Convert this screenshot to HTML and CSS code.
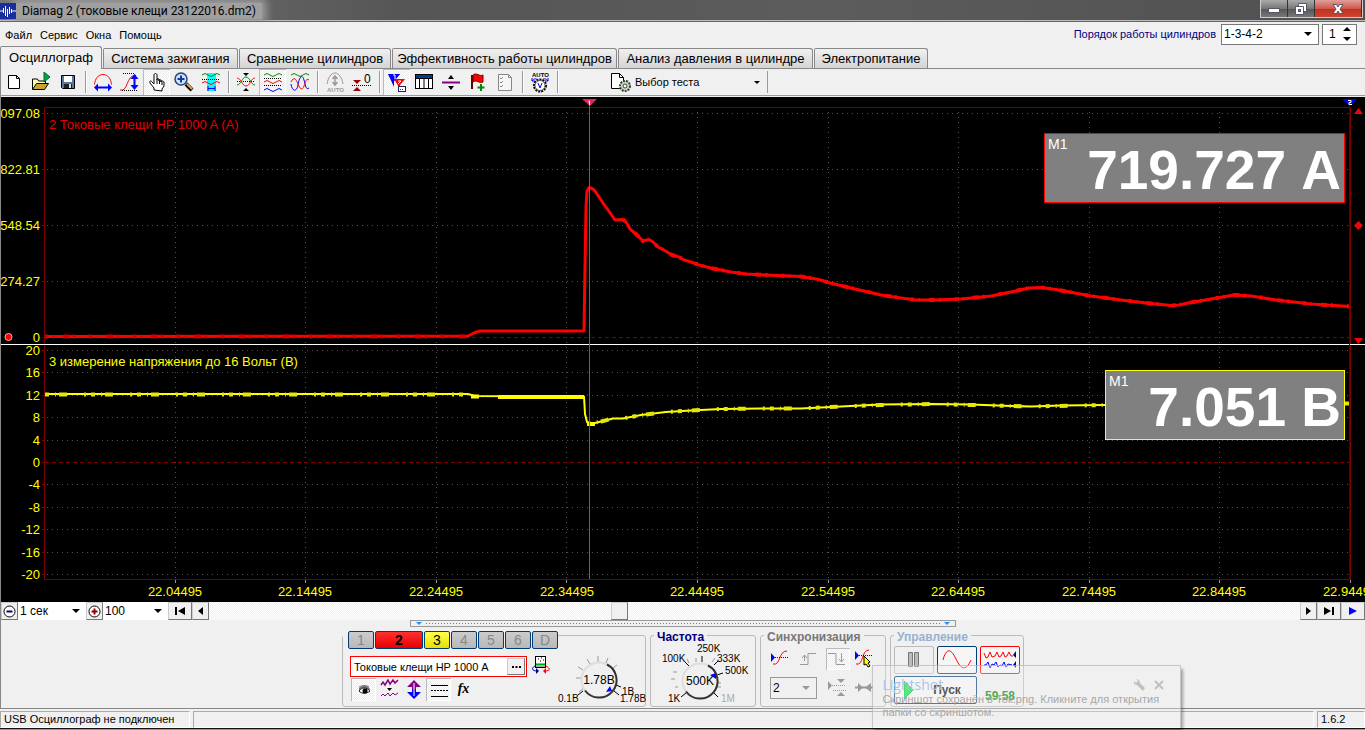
FILE: index.html
```html
<!DOCTYPE html>
<html lang="ru">
<head>
<meta charset="utf-8">
<title>Diamag 2</title>
<link rel="stylesheet" href="styles.css">
</head>
<body>
<div class="app">
<header class="titlebar">
  <svg class="app-icon" width="16" height="16" viewBox="0 0 16 16"><rect width="16" height="16" fill="#1a2f9c"/><path d="M0 8h3M3.500 5v5M5.500 3v10M7.500 6v8M9.500 4v7M11.500 6v4M12 8h4" stroke="#fff" fill="none"/></svg>
  <h1 class="title">Diamag 2 (токовые клещи 23122016.dm2)</h1>
  <div class="win-buttons">
    <button class="win" aria-label="Свернуть"><svg width="14" height="12" viewBox="0 0 14 12"><rect x="1.500" y="5.500" width="11" height="4" fill="#fff" stroke="#555869"/></svg></button>
    <button class="win" aria-label="Восстановить"><svg width="14" height="14" viewBox="0 0 14 14"><path d="M4.500 1.500h8v8h-8z" fill="#fff" stroke="#555869"/><path d="M1.500 4.500h8v8h-8z" fill="#fff" stroke="#555869"/><rect x="4.500" y="7.500" width="2" height="2" fill="#888" stroke="#555869"/></svg></button>
    <button class="win close" aria-label="Закрыть"><svg width="14" height="12" viewBox="0 0 14 12"><path d="M2 1.500h3.500L7 4l1.500-2.500H12L9 6l3 4.500H8.500L7 8l-1.500 2.500H2L5 6z" fill="#fff" stroke="#555869"/></svg></button>
  </div>
</header>

<div class="menurow">
  <nav class="menu"><button>Файл</button><button>Сервис</button><button>Окна</button><button>Помощь</button></nav>
  <label class="order" for="order">Порядок работы цилиндров</label>
  <span class="pick order-pick"><select id="order"><option>1-3-4-2</option></select><i class="arrow"></i></span>
  <span class="spin"><input type="text" value="1" aria-label="Номер цилиндра"><svg width="8" height="14" viewBox="0 0 8 14"><path d="M0 4l4-4 4 4zM0 10h8l-4 4z"/></svg></span>
</div>

<nav class="tabs">
  <button class="tab t1 active">Осциллограф</button><button class="tab t2">Система зажигания</button><button class="tab t3">Сравнение цилиндров</button><button class="tab t4">Эффективность работы цилиндров</button><button class="tab t5">Анализ давления в цилиндре</button><button class="tab t6">Электропитание</button>
</nav>

<main class="work">
<div class="toolbar">
  <button class="tool" aria-label="Новый"><svg viewBox="0 0 24 24"><path d="M6.500 5.500h8l3 3v10h-11z" fill="#fff" stroke="#000"/><path d="M14.500 5.500v3h3" fill="none" stroke="#000"/></svg></button>
  <button class="tool" aria-label="Открыть"><svg viewBox="0 0 24 24"><path d="M3.500 19v-10h5l1 2h7v4" fill="#ffffb0" stroke="#000"/><path d="M3.500 19.500l4-6h12l-4 6z" fill="#c8a42c" stroke="#000"/><path d="M15 2l6 5-6 5z" fill="#00a838" stroke="#064"/></svg></button>
  <button class="tool" aria-label="Сохранить"><svg viewBox="0 0 24 24"><path d="M5.500 5.500h13v13h-12l-1-1z" fill="#5878a8" stroke="#000"/><path d="M8 6h8v6H8z" fill="#fff"/><path d="M8 14h8v4H8z" fill="#222"/><path d="M13 14h2v4h-2z" fill="#ddd"/></svg></button>
  <i class="sep"></i>
  <button class="tool" aria-label="Масштаб по горизонтали"><svg viewBox="0 0 24 24"><path d="M3.500 14.500C4 9 7 4.500 12 4.500S20 9 20.500 14.500" fill="none" stroke="#f00"/><path d="M5 17.500h14" stroke="#00f" stroke-width="2"/><path d="M3 17.500l4-4v8zM21 17.500l-4-4v8z" fill="#00f"/></svg></button>
  <button class="tool" aria-label="Масштаб по вертикали"><svg viewBox="0 0 24 24"><path d="M2 20c9 2 5-14 16-15" fill="none" stroke="#f00"/><path d="M5 3.500h12M4 20.500h16" stroke="#000" stroke-dasharray="1 1"/><path d="M16.500 7v11" stroke="#00f" stroke-width="2"/><path d="M16.500 4l4 5h-8zM16.500 20l4-5h-8z" fill="#00f"/></svg></button>
  <button class="tool pressed" aria-label="Рука"><svg viewBox="0 0 24 24"><path d="M9 20v-2l-4-5c-1-2 1-3 2-1l2 2V5c0-2 3-2 3 0v5-1h2v2-1h2v2-1c2 0 3 0 3 2v3l-2 3v2z" fill="#fff" stroke="#000"/><path d="M12 10v4M14.500 11v3M17 12v3" stroke="#000"/></svg></button>
  <button class="tool" aria-label="Лупа"><svg viewBox="0 0 24 24"><path d="M14 14l6 6" stroke="#000" stroke-width="4"/><path d="M15 14l5 5" stroke="#d8a860" stroke-width="2"/><circle cx="9" cy="9" r="6" fill="#c8e4ff" stroke="#28427c" stroke-width="1.500"/><path d="M5.500 9h7M9 5.500v7" stroke="#123a9c" stroke-width="2"/></svg></button>
  <button class="tool" aria-label="Область"><svg viewBox="0 0 24 24"><path d="M8 3h9v18H8z" fill="#0ff"/><path d="M3 5q3-3 6 0t6 0 6 0" fill="none" stroke="#080"/><path d="M3 13q3-3 6 0t6 0 6 0" fill="none" stroke="#f00"/><path d="M3 9.500h18" stroke="#000" stroke-dasharray="1 1"/><path d="M9 18.500h7M9 16v5M16 16v5" stroke="#00f"/></svg></button>
  <i class="sep"></i>
  <button class="tool" aria-label="Совместить"><svg viewBox="0 0 24 24"><path d="M3 11.500h18" stroke="#000" stroke-dasharray="1 1"/><path d="M3 15c4 0 5-8 9-8s5 8 9 8" fill="none" stroke="#080"/><path d="M3 8c4 0 5 8 9 8s5-8 9-8" fill="none" stroke="#f00"/><path d="M9 3h6l-3 3zM9 21h6l-3-3z"/></svg></button>
  <button class="tool pressed" aria-label="Раздельно"><svg viewBox="0 0 24 24"><path d="M3 5q3-3 6 0t6 0 6 0" fill="none" stroke="#080"/><path d="M3 12q3-3 6 0t6 0 6 0" fill="none" stroke="#f00"/><path d="M3 20q3-3 6 0t6 0 6 0" fill="none" stroke="#00f"/><path d="M3 8.500h18M3 15.500h18" stroke="#000" stroke-dasharray="1 1"/></svg></button>
  <button class="tool" aria-label="Вместе"><svg viewBox="0 0 24 24"><path d="M3 5q3-3 6 0t6 0 6 0" fill="none" stroke="#080"/><path d="M3 14c1 8 6 8 7 1s4-12 6-5 2 10 5 8" fill="none" stroke="#00f"/><path d="M3 12c3-6 5-3 7 2s4 7 6 2 2-8 5-6" fill="none" stroke="#f00"/></svg></button>
  <i class="sep"></i>
  <button class="tool" aria-label="Авто"><svg viewBox="0 0 24 24"><path d="M4 14C5 8 8 3 12 3s7 5 8 11" fill="none" stroke="#999"/><path d="M12 6v8M9.500 9l2.500-3 2.500 3M9.500 12l2.500 3 2.500-3" fill="none" stroke="#999" stroke-width="1.500"/><text x="4" y="22" class="ico-auto" fill="#999">AUTO</text></svg></button>
  <button class="tool" aria-label="Ноль"><svg viewBox="0 0 24 24"><path d="M3 10h8l-4 4zM3 21h8l-4-4z" fill="#900"/><path d="M2 15.500h19" stroke="#000" stroke-dasharray="1 1"/><text x="14" y="13" class="ico-zero">0</text></svg></button>
  <i class="sep"></i>
  <button class="tool pressed" aria-label="Маркеры"><svg viewBox="0 0 24 24"><path d="M3 4h12l-6 7v6z" fill="#00f"/><path d="M3 4l6 7 6-7z" fill="#00f"/><path d="M9 9h11l-5 6v4z" fill="#f00"/><path d="M8 5h2v4M13 11h3l-3 3" stroke="#fff" fill="none"/><rect x="13.500" y="16.500" width="7" height="5" fill="#fff" stroke="#226"/><path d="M15 19.500h4" stroke="#226" stroke-dasharray="1 1"/></svg></button>
  <button class="tool" aria-label="Таблица"><svg viewBox="0 0 24 24"><rect x="3.500" y="4.500" width="17" height="14" fill="#fff" stroke="#000"/><path d="M4 5h16v3H4z" fill="#003c8c"/><path d="M4 8.500h16M7.500 8v10M12 8v10M16.500 8v10" stroke="#000"/></svg></button>
  <button class="tool" aria-label="Разделить"><svg viewBox="0 0 24 24"><path d="M3 12.500h18" stroke="#808" stroke-width="2"/><path d="M9 9h6l-3-4zM9 16h6l-3 4z"/></svg></button>
  <button class="tool" aria-label="Флаг"><svg viewBox="0 0 24 24"><path d="M6 5v14" stroke="#600" stroke-width="2"/><path d="M7 5c4-3 6 2 10 0v7c-4 2-6-3-10 0z" fill="#f00" stroke="#700"/><path d="M15 14v7M11.500 17.500h7" stroke="#080" stroke-width="2"/></svg></button>
  <button class="tool" aria-label="Список"><svg viewBox="0 0 24 24"><path d="M5.500 4.500h10l3 3v13h-13z" fill="#f6f6f6" stroke="#888"/><path d="M15.500 4.500v3h3M7 8l1 1 2-2M7 12l1 1 2-2M7 16l1 1 2-2" fill="none" stroke="#888"/></svg></button>
  <i class="sep"></i>
  <button class="tool" aria-label="Автовольтметр"><svg viewBox="0 0 24 24"><text x="4" y="7" class="ico-auto">AUTO</text><path d="M4 11c2-3 4-2 5-2M20 11c-2-3-4-2-5-2M4 8v3h3M20 8v3h-3" fill="none" stroke="#00f"/><circle cx="12" cy="15.500" r="6" fill="#fff" stroke="#000" stroke-width="2" stroke-dasharray="2 1"/><circle cx="12" cy="15.500" r="5" fill="#fff" stroke="#555"/><path d="M10 13l2 5 2-5" fill="none" stroke="#00f"/></svg></button>
  <i class="sep"></i>
  <button class="test"><svg width="24" height="24" viewBox="0 0 24 24"><path d="M3.500 3.500h8l4 4v11h-12z" fill="#fff" stroke="#000"/><path d="M11.500 3.500v4h4" fill="none" stroke="#000"/><circle cx="17" cy="16" r="5" fill="#cddccd" stroke="#354535" stroke-width="2" stroke-dasharray="2 1"/><circle cx="17" cy="16" r="2" fill="#fff" stroke="#354535"/></svg><span>Выбор теста</span><i class="arrow small"></i></button>
</div>

<section class="scope">
<svg class="plot" viewBox="0 97 1364 505" role="img" aria-label="Осциллограмма">
  <g class="grid">
    <path d="M46 113.500H1349M46 169.500H1349M46 225.500H1349M46 281.500H1349M46 350.500H1349M46 372.500H1349M46 395.500H1349M46 417.500H1349M46 440.500H1349M46 484.500H1349M46 507.500H1349M46 529.500H1349M46 552.500H1349M46 574.500H1349"/>
    <path d="M174.500 112V579M304.500 112V579M435.500 112V579M565.500 112V579M696.500 112V579M827.500 112V579M957.500 112V579M1088.500 112V579M1218.500 112V579"/>
  </g>
  <path class="zero" d="M44 337.500H1349M44 462.500H1349"/>
  <path class="frame" d="M41 113.500h3M41 169.500h3M41 225.500h3M41 281.500h3M41 337.500h3M41 350.500h3M41 372.500h3M41 395.500h3M41 417.500h3M41 440.500h3M41 462.500h3M41 484.500h3M41 507.500h3M41 529.500h3M41 552.500h3M41 574.500h3M43.500 579.500V107.500H1349.500V579.500z"/>
  <path class="ticks" d="M174.500 580v3M304.500 580v3M435.500 580v3M565.500 580v3M696.500 580v3M827.500 580v3M957.500 580v3M1088.500 580v3M1218.500 580v3M1349.500 580v3"/>
  <path class="split" d="M0 344.500H1364"/>
  <g class="axis y">
    <text x="39" y="118">1097.08</text><text x="39" y="174">822.81</text><text x="39" y="230">548.54</text><text x="39" y="286">274.27</text><text x="39" y="342">0</text>
    <text x="39" y="355">20</text><text x="39" y="377">16</text><text x="39" y="400">12</text><text x="39" y="422">8</text><text x="39" y="445">4</text><text x="39" y="467">0</text><text x="39" y="489">-4</text><text x="39" y="512">-8</text><text x="39" y="534">-12</text><text x="39" y="557">-16</text><text x="39" y="579">-20</text>
  </g>
  <g class="axis x">
    <text x="174" y="596">22.04495</text><text x="304" y="596">22.14495</text><text x="435" y="596">22.24495</text><text x="566" y="596">22.34495</text><text x="696" y="596">22.44495</text><text x="827" y="596">22.54495</text><text x="957" y="596">22.64495</text><text x="1088" y="596">22.74495</text><text x="1218" y="596">22.84495</text><text x="1349" y="596">22.94495</text>
  </g>
  <text class="chan red" x="48" y="129">2 Токовые клещи HP 1000 A (А)</text>
  <text class="chan yellow" x="48" y="366">3 измерение напряжения до 16 Вольт (В)</text>
  <path class="trace red" d="M44 336.500L467 336L474 332.500L479 331L583 331L584 267L585 207L586 191L588 187.500L592 189L594 191L602 203L607 210L612 217L614 220L622 219.500L625 222L629 229L635 234L640 239L642 241L648 239.500L652 242L657 247L663 250L671 255L678 257L683 260L690 262L698 265L712 268.500L730 272L745 274L765 275L800 276.500L818 279.500L829 283L850 288L880 295L900 298L915 300L935 300L960 299L990 296L1010 292L1028 288L1040 287.500L1055 289.500L1090 296L1120 300L1145 303L1170 305.500L1178 305L1187 303L1210 299L1233 295L1250 296L1275 300L1310 304L1349 306.500"/>
  <path class="noise red" d="M44 336.500H467"/>
  <path class="noise bright" d="M622 219.500L625 222L629 229L635 234L640 239L642 241L648 239.500L652 242L657 247L663 250L671 255L678 257L683 260L690 262L698 265L712 268.500L730 272L745 274L765 275L800 276.500L818 279.500L829 283L850 288L880 295L900 298L915 300L935 300L960 299L990 296L1010 292L1028 288L1040 287.500L1055 289.500L1090 296L1120 300L1145 303L1170 305.500L1178 305L1187 303L1210 299L1233 295L1250 296L1275 300L1310 304L1349 306.500"/>
  <path class="trace yellow" d="M44 394L467 394L474 396L583 396.500L584 414L586 422L590 424L600 421.500L612 418.500L622 418.500L640 415L665 412L690 410.500L720 409L760 408.500L800 408.500L840 406.500L880 404.500L930 404L970 404.500L1010 406L1030 406.500L1060 405.500L1104 405L1330 403.500L1349 403.500"/>
  <path class="noise yellow" d="M44 394.500H467M586 424L600 421.500L612 418.500L622 418.500L640 415L665 412L690 410.500L720 409L760 408.500L800 408.500L840 406.500L880 405L930 404L970 405L1030 406.500L1104 405M1344 403.500h5"/>
  <path class="thick yellow" d="M470 396.500h8M497 397h86M586 424h8"/>
  <path d="M588.500 99V579" stroke="#e0285a"/>
  <path d="M1348.500 99V579" stroke="#0000ff"/>
  <path d="M581 99h15l-7 7z" fill="#e0285a"/><path d="M587.500 101.500l1-.5v4" stroke="#fff" fill="none"/>
  <path d="M1341 99h15l-7 7z" fill="#0000ff"/><path d="M1347 100.500h3v2h-2v2h3" stroke="#fff" fill="none"/>
  <circle cx="7.500" cy="337" r="3.500" fill="#f00" stroke="#faa"/>
  <path d="M1353 114h9l-4.500-6zM1353 338h9l-4.500 6zM1357.500 221l4.500 4.500-4.500 4.500-4.500-4.500z" fill="#f00"/>
</svg>
<div class="readout amps"><span>M1</span><output>719.727 А</output></div>
<div class="readout volts"><span>M1</span><output>7.051 В</output></div>
</section>

<div class="scrollrow">
  <button class="btn3d b17" aria-label="Уменьшить"><svg width="13" height="13" viewBox="0 0 13 13"><circle cx="6.500" cy="6.500" r="5.500" fill="#fff" stroke="#000"/><path d="M3.500 6.500h6" stroke="#000080" stroke-width="2"/></svg></button>
  <span class="pick time-pick"><select aria-label="Время"><option>1 сек</option></select><i class="arrow"></i></span>
  <button class="btn3d b17" aria-label="Увеличить"><svg width="13" height="13" viewBox="0 0 13 13"><circle cx="6.500" cy="6.500" r="5.500" fill="#fff" stroke="#000"/><path d="M3.500 6.500h6M6.500 3.500v6" stroke="#900" stroke-width="2"/></svg></button>
  <span class="pick pct-pick"><select aria-label="Масштаб"><option>100</option></select><i class="arrow"></i></span>
  <button class="btn3d b24" aria-label="В начало"><svg width="12" height="8" viewBox="0 0 12 8"><path d="M1 0h2v8H1zM11 0v8L4 4z"/></svg></button>
  <button class="btn3d b17" aria-label="Назад"><svg width="5" height="8" viewBox="0 0 5 8"><path d="M5 0v8L0 4z"/></svg></button>
  <input class="track" type="range" min="0" max="1000" value="374" aria-label="Прокрутка">
  <button class="btn3d b17" aria-label="Вперёд"><svg width="5" height="8" viewBox="0 0 5 8"><path d="M0 0v8l5-4z"/></svg></button>
  <button class="btn3d b24" aria-label="В конец"><svg width="12" height="8" viewBox="0 0 12 8"><path d="M9 0h2v8H9zM1 0v8l7-4z"/></svg></button>
  <button class="btn3d b24" aria-label="Воспроизвести"><svg width="9" height="8" viewBox="0 0 9 8"><path d="M0 0v8l8-4z" fill="#00f"/></svg></button>
</div>
<div class="splitter"><i></i><b></b><i></i></div>

<div class="panels">
  <section class="group g1">
    <div class="g1-left">
      <div class="channels"><button class="ch">1</button><button class="ch on2">2</button><button class="ch on3">3</button><button class="ch">4</button><button class="ch">5</button><button class="ch">6</button><button class="ch">D</button></div>
      <div class="sensor-row">
        <div class="sensor"><input type="text" value="Токовые клещи HP 1000 А" aria-label="Датчик"><button class="btn3d dots" aria-label="Выбрать"><svg width="9" height="2" viewBox="0 0 9 2"><path d="M0 0h2v2H0zM3.500 0h2v2h-2zM7 0h2v2H7z"/></svg></button></div>
        <svg width="18" height="19" viewBox="0 0 18 19"><rect x="3.500" y=".5" width="10" height="11" fill="#fff" stroke="#000"/><path d="M4 7h9v4H4z" fill="#aaa"/><path d="M4 8.500h9" stroke="#0a0"/><path d="M6 3h1M9 2h1M11 4h1M8 5h1" stroke="#000"/><path d="M3 10c-4 2-3 5 2 5" stroke="#00008c" fill="none"/><path d="M4 12v6l3-3z" fill="#00008c"/><path d="M14 10c4 2 5 5-1 5" stroke="#f00" fill="none"/><path d="M14 12v6l-3-3z" fill="#f00"/></svg>
      </div>
      <div class="mini">
        <button class="mb pressed" aria-label="Показать"><svg viewBox="0 0 24 22"><path d="M7 10c3-3 8-4 11 1-1 5-8 6-11 2z" fill="#777"/><path d="M7 13c3-4 7-4 11 0-4 3-8 3-11 0z" fill="#fff" stroke="#222"/><circle cx="13" cy="13" r="2.500"/><path d="M7 9c4-2 7-2 10 0" stroke="#777" fill="none"/></svg></button>
        <button class="mb" aria-label="Фильтр"><svg viewBox="0 0 24 22"><path d="M4 7l2-3 2 3 3-5 2 4 3-4 2 3 3-3" fill="none" stroke="#808" stroke-width="1.500"/><path d="M10 10h5l-2.500 3z"/><path d="M4 18l2-2 2 2 3-3 2 3 3-3 2 2 3-2" fill="none" stroke="#808"/></svg></button>
        <button class="mb" aria-label="Инвертировать"><svg viewBox="0 0 24 22"><path d="M12 2l7 7h-5v3h-4V9H5z" fill="#808"/><path d="M12 21l7-7h-5v-3h-4v3H5z" fill="#00f"/><path d="M12 5v13" stroke="#fff"/></svg></button>
        <button class="mb pressed" aria-label="Линии"><svg viewBox="0 0 24 22"><path d="M4 7.500h17M4 18.500h17" stroke="#000"/><path d="M4 12.500h17" stroke="#000" stroke-dasharray="2 1"/></svg></button>
        <button class="mb fx">fx</button>
      </div>
    </div>
    <svg class="knob k1" width="88" height="60" viewBox="556 645 88 60">
      <path d="M577 692l5-4M574 678h5M576 667l5 3M585 659l3 5M596 656v6M606 658l-2 5M615 665l-4 3" stroke="#999"/><path d="M612 691l5 4M614 685l5 2M576 695l5-4" stroke="#000"/>
      <circle cx="597" cy="680" r="17.500" fill="#f0f0f0" stroke="#ddd" stroke-width="2"/><path d="M605 664.500A17.500 17.500 0 1 1 583 690.500" fill="none" stroke="#333" stroke-width="2"/><path d="M604 692l6-1-2-5z" fill="#00f"/>
      <text x="597" y="684" class="kval">1.78B</text><text x="556" y="702" class="klab">0.1B</text><text x="620" y="695" class="klab">1B</text><text x="618" y="702" class="klab">1.78B</text>
    </svg>
  </section>
  <section class="group g2"><h2 class="navy">Частота</h2>
    <svg class="knob" width="103" height="62" viewBox="652 643 103 62">
      <path d="M679 686h-3M676 678h-4M678 671h-4M690 662l-2-4M697 657v4M713 661l3-4M718 682h4M718 686h4" stroke="#999"/><path d="M686 661l4 4M703 655v6M715 664l4-4M718 674l6-2M682 696l5-4M715 692l4 4" stroke="#000"/>
      <circle cx="701" cy="680" r="17.500" fill="#f0f0f0" stroke="#ddd" stroke-width="2"/><path d="M709 664.500A17.500 17.500 0 1 1 687 690.500" fill="none" stroke="#333" stroke-width="2"/><path d="M711 674l6-2v6z" fill="#00f"/>
      <text x="701" y="684" class="kval">500K</text><text x="663" y="661" class="klab">100K</text><text x="698" y="651" class="klab">250K</text><text x="718" y="661" class="klab">333K</text><text x="726" y="673" class="klab">500K</text><text x="669" y="701" class="klab">1K</text><text x="722" y="701" class="klab dim">1M</text>
    </svg>
  </section>
  <section class="group g3"><h2 class="gray">Синхронизация</h2>
    <div class="sync">
      <button aria-label="Уровень"><svg viewBox="0 0 22 22"><path d="M3 16c8 2 5-13 14-13" fill="none" stroke="#f00"/><path d="M1 9.500h17" stroke="#00f" stroke-dasharray="1 1"/><path d="M1 5l4 4.500L1 14z" fill="#00f"/></svg></button>
      <button aria-label="Фронт"><svg viewBox="0 0 22 22"><path d="M2 16.500h8v-11h8" fill="none" stroke="#999"/><path d="M6.500 7v6M4 10l2.500-3L9 10" fill="none" stroke="#999"/></svg></button>
      <button class="pressed" aria-label="Спад"><svg viewBox="0 0 22 22"><path d="M2 5.500h8v11h9" fill="none" stroke="#999"/><path d="M15.500 5v9M13 11l2.500 3 2.500-3" fill="none" stroke="#999"/></svg></button>
      <button aria-label="Авто"><svg viewBox="0 0 22 22"><path d="M2 16c8 2 5-14 13-14" fill="none" stroke="#f00"/><path d="M1 7.500h18" stroke="#00f" stroke-dasharray="1 1"/><path d="M1 3l4 4.500L1 12z" fill="#00f"/><path d="M10 8l6 6-2 1 2 3-2 1-2-3-2 1z" fill="#ff0" stroke="#000"/></svg></button>
      <span class="pick sync-pick"><select aria-label="Канал"><option>2</option></select><i class="arrow"></i></span>
      <button aria-label="Смещение"><svg viewBox="0 0 22 22"><path d="M4 8.500h16M7 13.500h13" stroke="#999" stroke-dasharray="1 1"/><path d="M2 4v9l4-4.500zM11 2h8l-4 4zM11 19h8l-4-4z" fill="#999"/></svg></button>
      <button aria-label="Сжать"><svg viewBox="0 0 22 22"><path d="M1 10.500h18" stroke="#999" stroke-width="2"/><path d="M4 6v9l5-4.500zM17 6v9l-6-4.500z" fill="#999"/></svg></button>
    </div>
  </section>
  <section class="group g4"><h2 class="pale">Управление</h2>
    <div class="control">
      <button class="cb off" aria-label="Пауза"><svg width="14" height="16" viewBox="0 0 14 16"><path d="M1.500.5h4v14h-4zM7.500.5h4v14h-4z" fill="#bbb" stroke="#777"/></svg></button>
      <button class="cb" aria-label="Синус"><svg width="30" height="20" viewBox="0 0 30 20"><path d="M1 10C4-2 9-2 14 9s10 12 15 1" fill="none" stroke="#f00"/></svg></button>
      <button class="cb hot" aria-label="Кадры"><svg width="34" height="20" viewBox="0 0 34 20"><path d="M1 3l2 5 2-1 2-5 2 5 3-1 2-4 2 5 2-1 2-4 2 5 2-1 2-4 2 4h2" fill="none" stroke="#f00"/><path d="M1 15h2l2-3 2 6 2-4 2 1 2-3 2 5 2-2 2 1 2-4 2 5 2-3 4 1" fill="none" stroke="#00f"/><path d="M33 1v7l-3-3zM33 11v7l-3-3z" fill="#008"/></svg></button>
      <button class="cb start"><svg width="10" height="18" viewBox="0 0 10 18"><path d="M0 0l9 9-9 9z" fill="#00e83c" stroke="#0a3"/></svg><span>Пуск</span></button>
      <output class="rate">59.58</output>
    </div>
  </section>
</div>
</main>

<footer class="status"><span class="s1">USB Осциллограф не подключен</span><span class="s2"></span><span class="s3">1.6.2</span></footer>
<div class="edge"></div>

<aside class="toast">
  <div class="toast-head"><a href="#">Lightshot</a><svg width="34" height="14" viewBox="0 0 34 14"><path d="M3 1l3 1 1 3 5 5-2 3-6-6-3-1V3l2 2 2-2z" fill="#c0c0c0"/><path d="M22 3l8 8M30 3l-8 8" stroke="#c0c0c0" stroke-width="2"/></svg></div>
  <p>Скриншот сохранён в Ток.png. Кликните для открытия папки со скриншотом.</p>
</aside>
</div>
</body>
</html>
```
FILE: styles.css
```css
* { box-sizing: border-box; }
body { margin: 0; background: #f0f0f0; font: 11px/14px "Liberation Sans", sans-serif; color: #000; }
button, input, select { font: inherit; color: inherit; margin: 0; padding: 0; border: 0; background: none; border-radius: 0; }
svg { display: block; flex: none; }
.app { position: relative; min-height: 100vh; display: flex; flex-direction: column; }

.titlebar { display: flex; align-items: flex-start; height: 22px; padding: 0 2px 0 0; background: linear-gradient(90deg, #777, #555 30%, #5c5c5c 60%, #505050); border-bottom: 1px solid #666; box-shadow: inset 0 -1px #bbb; overflow: hidden; }
.app-icon { position: relative; z-index: 1; margin-top: 3px; }
.title { margin: 3px 0 0; padding: 0 6px; font: 12px/16px Roboto, sans-serif; color: #000; background: #a0a0a0; box-shadow: 0 0 8px 4px #a0a0a0; }
.win-buttons { display: flex; margin-left: auto; border: 1px solid #ccc; border-top: 0; }
.win { display: flex; justify-content: center; align-items: center; width: 27px; height: 17px; background: linear-gradient(#aaa, #777 50%, #555 51%, #777); border-right: 1px solid #333; }
.win.close { width: 47px; background: linear-gradient(#e0a098, #d0574c 50%, #c03020 51%, #d0432f); }

.menurow { display: flex; align-items: center; height: 24px; padding: 0 8px 0 5px; }
.menu { display: flex; gap: 8px; margin-right: auto; }
.menu button { line-height: 16px; padding-top: 2px; }
.order { color: #000080; margin-right: 5px; }
.pick { display: inline-grid; align-items: center; background: #fff; }
.pick select { grid-area: 1 / 1; width: 100%; height: 100%; appearance: none; padding-left: 2px; }
.arrow { grid-area: 1 / 1; justify-self: end; margin-right: 6px; border: 4px solid transparent; border-top-color: #000; border-bottom: 0; pointer-events: none; }
.arrow.small { border-width: 3px; border-bottom: 0; }
.order-pick { width: 98px; height: 21px; border: 1px solid #777; margin-right: 3px; font-size: 12px; }
.spin { display: flex; align-items: center; width: 35px; height: 21px; padding: 0 6px; background: #fff; border: 1px solid #777; font-size: 12px; }
.spin input { width: 14px; }

.tabs { display: flex; align-items: flex-end; gap: 1px; height: 23px; border-bottom: 1px solid #888; }
.tab { height: 20px; font-size: 13px; line-height: 18px; text-align: center; white-space: nowrap; border: 1px solid #888; border-bottom: 0; border-radius: 2px 3px 0 0; background: linear-gradient(#f0f0f0, #d4d4d4); }
.tab.active { height: 23px; margin-bottom: -1px; background: #f0f0f0; }
.t1 { width: 102px; } .t2 { width: 135px; } .t3 { width: 152px; } .t4 { width: 225px; } .t5 { width: 195px; } .t6 { width: 114px; }

.work { border-left: 1px solid #888; border-bottom: 1px solid #888; }
.toolbar { display: flex; height: 27px; margin-left: -1px; border-bottom: 1px solid #999; }
.tool { display: flex; justify-content: center; align-items: center; width: 27px; height: 26px; }
.tool svg { width: 24px; height: 24px; }
.pressed { background: repeating-conic-gradient(#fff 0 25%, #ececec 0 50%) 0 0 / 2px 2px; box-shadow: inset 1px 1px #bbb, inset -1px -1px #fff; }
.sep { width: 8px; height: 22px; margin-top: 2px; background: linear-gradient(90deg, transparent 4px, #999 4px, #999 5px, #fff 5px, #fff 6px, transparent 6px); }
.test { display: flex; align-items: center; width: 160px; height: 22px; margin: 2px 0 0 47px; border-right: 1px solid #999; gap: 3px; }
.test .arrow { margin-left: auto; margin-right: 7px; }
.ico-auto { font: bold 6px "Liberation Sans", sans-serif; }
.ico-zero { font: 12px "Liberation Sans", sans-serif; }

.scope { position: relative; margin-top: 1px; background: #000; }
.plot { width: 100%; height: auto; }
.grid path { fill: none; stroke: #505050; stroke-dasharray: 1 4; }
.zero { stroke: #800000; stroke-dasharray: 4 3; }
.frame { fill: none; stroke: #800000; }
.ticks { stroke: #999; }
.split { stroke: #fff; }
.axis, .chan { font: 13px "Liberation Sans", sans-serif; fill: #ff0; }
.axis.y { text-anchor: end; }
.axis.x { text-anchor: middle; }
.chan.red { fill: #e00000; }
.trace, .noise, .thick { fill: none; stroke-linejoin: round; }
.trace.red { stroke: #f00; stroke-width: 3; }
.trace.yellow { stroke: #ff0; stroke-width: 2; }
.noise { stroke-width: 4; stroke-dasharray: 3 5 1 9 6 4 2 14; }
.noise.red { stroke: #d00000; }
.noise.bright { stroke: #f00; }
.noise.yellow { stroke: #e6e600; stroke-dasharray: 4 6 1 3 8 17 2 5; }
.thick { stroke: #ff0; stroke-width: 4; }
.readout { position: absolute; right: 20px; height: 70px; padding: 0 3px; display: flex; justify-content: space-between; color: #fff; background: #808080; border: 1px solid #f00; }
.readout span { font-size: 14px; line-height: 20px; }
.readout output { font-weight: bold; font-size: 55px; line-height: 72px; white-space: nowrap; }
.amps { top: 36px; width: 301px; }
.volts { top: 273px; width: 240px; border-color: #ff0; }

.scrollrow { display: flex; height: 18px; background: #fff; }
.btn3d { display: flex; justify-content: center; align-items: center; flex: none; background: #f0f0f0; border: 1px solid; border-color: #ccc #777 #777 #ccc; }
.b17 { width: 17px; } .b24 { width: 24px; }
.time-pick { width: 68px; } .pct-pick { width: 65px; }
.scrollrow .pick { font-size: 12px; height: 17px; }
.track { flex: 1; min-width: 0; height: 18px; appearance: none; background: repeating-conic-gradient(#fff 0 25%, #f0f0f0 0 50%) 0 0 / 2px 2px; }
.track::-webkit-slider-thumb { appearance: none; width: 17px; height: 18px; background: #f0f0f0; border: 1px solid; border-color: #ccc #777 #777 #ccc; }

.splitter { display: flex; align-items: center; width: 40%; height: 7px; margin: 0 auto; padding: 0 5px; gap: 4px; border: 1px solid #999; }
.splitter i { border: 3px solid transparent; border-top-color: #1e90ff; border-bottom: 0; }
.splitter b { flex: 1; height: 1px; background: repeating-linear-gradient(90deg, #1e90ff 0 1px, transparent 1px 3px); }

.panels { display: flex; justify-content: center; gap: 4px; padding: 8px 0 1px; }
.group { height: 72px; border: 1px solid #bbb; border-radius: 3px; }
.group h2 { width: fit-content; margin: -6px 0 0 3px; padding: 0 3px; font: bold 12px/14px "Liberation Sans", sans-serif; background: #f0f0f0; }
.navy { color: #000080; } .gray { color: #777; } .group .pale { color: #96b2d0; }
.g1 { display: flex; justify-content: space-between; width: 304px; padding-right: 1px; }
.g2 { width: 106px; } .g3 { width: 126px; } .g4 { width: 134px; }
.g1-left { width: 215px; }
.channels { display: flex; gap: 1px; margin: -5px 0 0; padding: 0 0 0 5px; background: #f0f0f0; }
.ch { width: 26px; height: 18px; font-size: 14px; line-height: 16px; color: #888; background: linear-gradient(#ccc, #b8b8b8); border: 1px solid #003c74; border-radius: 2px; }
.on2 { width: 48px; color: #000; font-weight: bold; background: linear-gradient(#ff3030, #e80000); }
.on3 { color: #000; background: linear-gradient(#ffff50, #e8e000); }
.sensor-row { display: flex; gap: 5px; margin: 7px 0 0 7px; }
.sensor { display: flex; width: 177px; height: 21px; padding: 1px; border: 1px solid #f00; background: #fff; }
.sensor input { flex: 1; min-width: 0; padding-left: 2px; }
.dots { width: 18px; }
.mini { display: flex; margin: 1px 0 0 8px; }
.mb { display: flex; justify-content: center; width: 25px; height: 23px; }
.mb svg { width: 24px; height: 22px; }
.fx { font: italic bold 14px/22px "Liberation Serif", serif; }
.k1 { margin-top: 9px; }
.kval { font: 12px "Liberation Sans", sans-serif; text-anchor: middle; }
.klab { font: 10px "Liberation Sans", sans-serif; }
.dim { fill: #aaa; }
.sync { display: grid; grid-template-columns: repeat(4, 24px); gap: 7px 4px; padding: 4px 0 0 9px; }
.sync svg { width: 22px; height: 22px; }
.sync button { width: 24px; height: 22px; }
.sync-pick { grid-column: span 2; width: 47px; height: 22px; border: 1px solid #999; background: #f0f0f0; font-size: 12px; }
.sync-pick .arrow { border-top-color: #999; }
.control { display: grid; grid-template-columns: repeat(3, 40px); gap: 2px 3px; padding: 2px 0 0 3px; }
.cb { display: flex; justify-content: center; align-items: center; height: 28px; border: 1px solid #003c74; border-radius: 2px; background: #f6f6f6; }
.off { border-color: #bbb; background: #f0f0f0; }
.hot { border-color: #f00; }
.start { grid-column: span 2; gap: 19px; padding-right: 6px; font: bold 12px/16px "Liberation Sans", sans-serif; }
.rate { align-self: center; padding: 12px 0 0 5px; font-weight: bold; font-size: 12px; line-height: 14px; color: #008000; }

.status { display: flex; height: 19px; padding: 2px 0 0; gap: 3px; }
.status span { padding: 0 3px; border: 1px solid; border-color: #aaa #fff #fff #aaa; font-size: 11px; line-height: 15px; white-space: nowrap; }
.s1 { width: 190px; } .s2 { flex: 1; } .s3 { width: 48px; }
.edge { height: 2px; background: linear-gradient(#111 1px, #999 1px); }

.toast { position: absolute; left: calc(50% + 189px); bottom: 2px; width: 309px; height: 63px; padding: 10px 8px 0 10px; background: rgba(240, 240, 242, .35); border: 1px solid rgba(170, 170, 170, .6); border-bottom: 0; box-shadow: 2px 4px 3px rgba(0, 0, 0, .35); color: #a8a8a8; }
.toast-head { display: flex; justify-content: space-between; align-items: center; padding-right: 5px; height: 17px; }
.toast a { font: 14px/17px "Open Sans", sans-serif; color: #a9c4e4; text-decoration: none; }
.toast p { margin: 0; font: 11px/13px "Liberation Sans", sans-serif; }
```
